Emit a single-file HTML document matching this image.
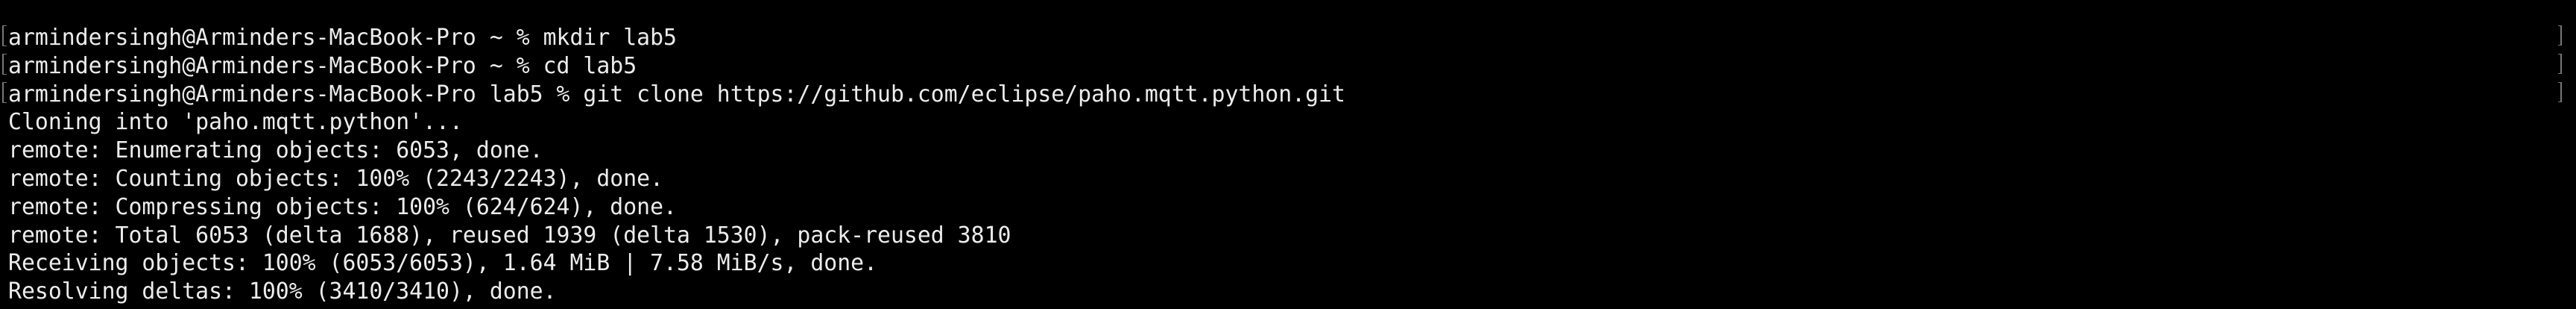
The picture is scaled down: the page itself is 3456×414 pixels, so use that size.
<!DOCTYPE html>
<html><head><meta charset="utf-8"><style>
html,body{margin:0;padding:0;background:#000;width:3456px;height:414px;overflow:hidden}
.t{position:absolute;left:11px;top:32px;font-family:"DejaVu Sans Mono","Liberation Mono",monospace;font-size:29.8px;line-height:37.8px;color:#ececec;white-space:pre}
.lb{position:absolute;left:3px;width:4px;height:26px;border-left:2px solid #777;border-top:1px solid #777;border-bottom:1px solid #777}
.rb{position:absolute;left:3432px;width:3px;height:25px;border-right:2px solid #777;border-top:1px solid #777;border-bottom:1px solid #777}
</style></head><body>
<div class="lb" style="top:34px"></div><div class="lb" style="top:72px"></div><div class="lb" style="top:110px"></div>
<div class="rb" style="top:34px"></div><div class="rb" style="top:72px"></div><div class="rb" style="top:110px"></div>
<div class="t">armindersingh@Arminders-MacBook-Pro ~ % mkdir lab5
armindersingh@Arminders-MacBook-Pro ~ % cd lab5
armindersingh@Arminders-MacBook-Pro lab5 % git clone https://github.com/eclipse/paho.mqtt.python.git
Cloning into 'paho.mqtt.python'...
remote: Enumerating objects: 6053, done.
remote: Counting objects: 100% (2243/2243), done.
remote: Compressing objects: 100% (624/624), done.
remote: Total 6053 (delta 1688), reused 1939 (delta 1530), pack-reused 3810
Receiving objects: 100% (6053/6053), 1.64 MiB | 7.58 MiB/s, done.
Resolving deltas: 100% (3410/3410), done.</div>
</body></html>
